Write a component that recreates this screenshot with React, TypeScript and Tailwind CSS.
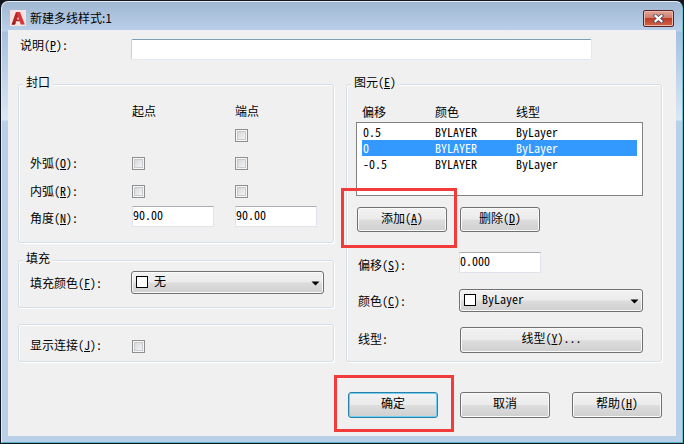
import type { ReactNode } from "react";

const GROUP =
  "min-w-0 rounded-[3px] border border-[#d5dfe5] shadow-[inset_1px_1px_0_#fff,1px_1px_0_#fff]";
const BUTTON =
  "rounded-[3px] border border-[#707070] bg-[linear-gradient(#f2f2f2_0%,#ebebeb_48%,#dddddd_52%,#cfcfcf_100%)] pb-1 shadow-[inset_0_0_0_1px_#fafafa]";
const FIELD =
  "h-[21px] w-[82px] rounded-[1px] border border-[#e2e3ea] border-t-[#abadb3] bg-white pb-1 outline-none";

function Key({ text, k, tail = "" }: { text: string; k: string; tail?: string }) {
  return (
    <span className="whitespace-nowrap">
      {text}(<span className="underline underline-offset-1">{k}</span>){tail}
    </span>
  );
}

function Tick({ id, label }: { id: string; label?: string }) {
  return (
    <input
      id={id}
      type="checkbox"
      aria-label={label}
      className="block size-[13px] appearance-none border border-[#8e8f8f] bg-[linear-gradient(135deg,#cdd0d3,#fbfbfb)] shadow-[inset_0_0_0_1px_#f6f6f6,inset_0_0_0_2px_#c9ccce]"
    />
  );
}

function Legend({ children }: { children: ReactNode }) {
  return <legend className="ml-1 h-4 bg-[#f0f0f0] px-[3px] leading-3">{children}</legend>;
}

function Combo({ id, value }: { id: string; value: string }) {
  return (
    <div className="relative h-[23px]">
      <select id={id} className={`${BUTTON} block h-full w-full appearance-none pl-[22px] text-left outline-none`}>
        <option>{value}</option>
      </select>
      <span className="pointer-events-none absolute left-[5px] top-[5px] size-3 border border-black bg-white" />
      <svg className="pointer-events-none absolute right-1 top-[10px] h-[5px] w-[9px]" viewBox="0 0 9 5">
        <path d="M0.5 0.5H8.5L4.5 4.5Z" fill="#000" />
      </svg>
    </div>
  );
}

const elements = [
  { offset: "0.5", color: "BYLAYER", type: "ByLayer", selected: false },
  { offset: "0", color: "BYLAYER", type: "ByLayer", selected: true },
  { offset: "-0.5", color: "BYLAYER", type: "ByLayer", selected: false },
];

export default function App() {
  return (
    <div className="min-h-screen bg-[#14161f] p-px text-xs text-black">
      <div className="rounded-t-[7px] border border-[#e3edf7] border-r-[#5ec8d8] border-b-[#4fb4c8] bg-[linear-gradient(#a0b7d2_0px,#bad0ea_29px,#a5c0df_30px,#dbe8f5_118px,#bad0e8_119px)] px-1.5 pb-1.5">
        <header className="flex h-7 items-center px-0.5 pt-1 font-['Noto_Sans_CJK_SC',sans-serif]">
          <svg className="mr-1 size-4" viewBox="0 0 16 16">
            <rect width="16" height="16" fill="#f6e3e1" />
            <path d="M1.5 14.5L6 2H9.6L7 9.4H10L10.6 11.2H6.2L5 14.5Z" fill="#b5262b" />
            <path d="M6.4 2H10L14.8 14.5H10.8L6.8 3.6Z" fill="#d5363a" />
            <path d="M1.5 14.5L4.4 12.2L5.6 12.4L5 14.5Z" fill="#7e1518" />
          </svg>
          <h1 className="flex-1">新建多线样式:1</h1>
          <button
            aria-label="关闭"
            className="flex h-[17px] w-[31px] items-center justify-center rounded-[2px] border border-[#5b2226] bg-[linear-gradient(#e3a496_0%,#d27c6b_46%,#bb3d25_50%,#d0634a_100%)] shadow-[inset_0_0_0_1px_#ecb9ad]"
          >
            <svg className="h-[9px] w-[11px]" viewBox="0 0 11 9">
              <path d="M2.5 1.8L8.5 7.2M8.5 1.8L2.5 7.2" stroke="#4c4a5c" strokeWidth="3.8" strokeLinecap="square" />
              <path d="M2.5 1.8L8.5 7.2M8.5 1.8L2.5 7.2" stroke="#fff" strokeWidth="2.2" strokeLinecap="square" />
            </svg>
          </button>
        </header>

        <main className="bg-[#f0f0f0] pb-[18px] pl-[10px] pr-[14px] pt-[9px] font-['Noto_Sans_CJK_SC',sans-serif] [font-feature-settings:'hwid']">
          <div className="flex items-start">
            <label htmlFor="desc" className="w-[113px] pl-0.5 leading-3">
              <Key text="说明" k="P" tail=":" />
            </label>
            <input
              id="desc"
              className="mr-[70px] h-[21px] min-w-0 flex-1 rounded-[2px] border border-[#e2e9ef] border-t-[#7d9fb5] border-l-[#c0d2de] bg-white px-1 outline-none"
            />
          </div>

          <div className="mt-4 grid grid-cols-2 gap-3">
            <div>
              <fieldset className={GROUP}>
                <Legend>封口</Legend>
                <div className="grid grid-cols-[102px_103px_1fr] grid-rows-[20px_28px_28px_28px_22px] items-center pb-[15px] pl-[11px] pt-[9px]">
                  <span className="col-start-2">起点</span>
                  <span>端点</span>
                  <div className="col-start-3">
                    <Tick id="line-end" label="直线 端点" />
                  </div>
                  <label htmlFor="outer-start">
                    <Key text="外弧" k="O" tail=":" />
                  </label>
                  <Tick id="outer-start" />
                  <Tick id="outer-end" label="外弧 端点" />
                  <label htmlFor="inner-start">
                    <Key text="内弧" k="R" tail=":" />
                  </label>
                  <Tick id="inner-start" />
                  <Tick id="inner-end" label="内弧 端点" />
                  <label htmlFor="angle-start" className="pt-1">
                    <Key text="角度" k="N" tail=":" />
                  </label>
                  <input id="angle-start" defaultValue="90.00" className={FIELD} />
                  <input aria-label="角度 端点" defaultValue="90.00" className={FIELD} />
                </div>
              </fieldset>

              <fieldset className={`${GROUP} mt-[9px]`}>
                <Legend>填充</Legend>
                <div className="grid grid-cols-[101px_1fr] items-center pb-[13px] pl-[11px] pr-[9px] pt-[3px]">
                  <label htmlFor="fill">
                    <Key text="填充颜色" k="F" tail=":" />
                  </label>
                  <Combo id="fill" value="无" />
                </div>
              </fieldset>

              <div className={`${GROUP} mt-4 grid h-[38px] grid-cols-[102px_1fr] items-center pl-[11px] pt-1.5`}>
                <label htmlFor="joints" className="pb-0.5">
                  <Key text="显示连接" k="J" tail=":" />
                </label>
                <Tick id="joints" />
              </div>
            </div>

            <fieldset className={GROUP}>
              <Legend>
                <Key text="图元" k="E" />
              </Legend>
              <div className="pl-[9px] pr-[18px] pt-[9px]">
                <table className="w-full table-fixed border-separate border-spacing-0 text-left">
                  <colgroup>
                    <col className="w-[79px]" />
                    <col className="w-[81px]" />
                    <col />
                  </colgroup>
                  <thead>
                    <tr className="h-[21px]">
                      <th className="p-0 pl-1.5 font-normal">偏移</th>
                      <th className="p-0 font-normal">颜色</th>
                      <th className="p-0 font-normal">线型</th>
                    </tr>
                  </thead>
                </table>
                <div className="h-[74px] border border-[#828282] bg-white px-[5px] pt-px">
                  <table className="w-full table-fixed border-separate border-spacing-0 text-left">
                    <colgroup>
                      <col className="w-[73px]" />
                      <col className="w-[81px]" />
                      <col />
                    </colgroup>
                    <tbody>
                      {elements.map((e) => (
                        <tr key={e.offset} className={e.selected ? "bg-[#3399ff] text-white" : ""}>
                          <td className="p-0 pl-px leading-4">{e.offset}</td>
                          <td className="p-0 leading-4">{e.color}</td>
                          <td className="p-0 leading-4">{e.type}</td>
                        </tr>
                      ))}
                    </tbody>
                  </table>
                </div>
                <div className="mt-[11px] flex gap-[13px] pl-px">
                  <div className="relative">
                    <button className={`${BUTTON} block h-[25px] w-[90px]`}>
                      <Key text="添加" k="A" />
                    </button>
                    <span className="pointer-events-none absolute -bottom-4 -left-4 -right-[10px] -top-[19px] border-3 border-[#f23c3c]" />
                  </div>
                  <button className={`${BUTTON} h-[25px] w-20`}>
                    <Key text="删除" k="D" />
                  </button>
                </div>
                <div className="mt-5 grid grid-cols-[101px_1fr] items-center pl-0.5">
                  <label htmlFor="offset" className="pt-1">
                    <Key text="偏移" k="S" tail=":" />
                  </label>
                  <input id="offset" defaultValue="0.000" className={FIELD} />
                </div>
                <div className="mt-4 grid grid-cols-[101px_1fr] items-center pl-0.5">
                  <label htmlFor="color">
                    <Key text="颜色" k="C" tail=":" />
                  </label>
                  <Combo id="color" value="ByLayer" />
                </div>
                <div className="mt-[15px] grid grid-cols-[102px_1fr] items-center pl-0.5">
                  <label htmlFor="linetype" className="pb-0.5">
                    线型:
                  </label>
                  <button id="linetype" className={`${BUTTON} h-[26px]`}>
                    <Key text="线型" k="Y" tail="..." />
                  </button>
                </div>
              </div>
            </fieldset>
          </div>

          <div className="mt-[30px] flex justify-end gap-[22px]">
            <div className="relative">
              <button className="block h-[26px] w-[90px] rounded-[3px] border border-[#2d7fa8] bg-[linear-gradient(#f2f2f2_0%,#ebebeb_48%,#dddddd_52%,#cfcfcf_100%)] pb-1 shadow-[inset_0_0_0_1px_#6fd0f2]">
                确定
              </button>
              <span className="pointer-events-none absolute -bottom-[14px] -left-[14px] -right-4 -top-[17px] border-3 border-[#f23c3c]" />
            </div>
            <button className={`${BUTTON} h-[26px] w-[90px]`}>取消</button>
            <button className={`${BUTTON} h-[26px] w-[90px]`}>
              <Key text="帮助" k="H" />
            </button>
          </div>
        </main>
      </div>
    </div>
  );
}
